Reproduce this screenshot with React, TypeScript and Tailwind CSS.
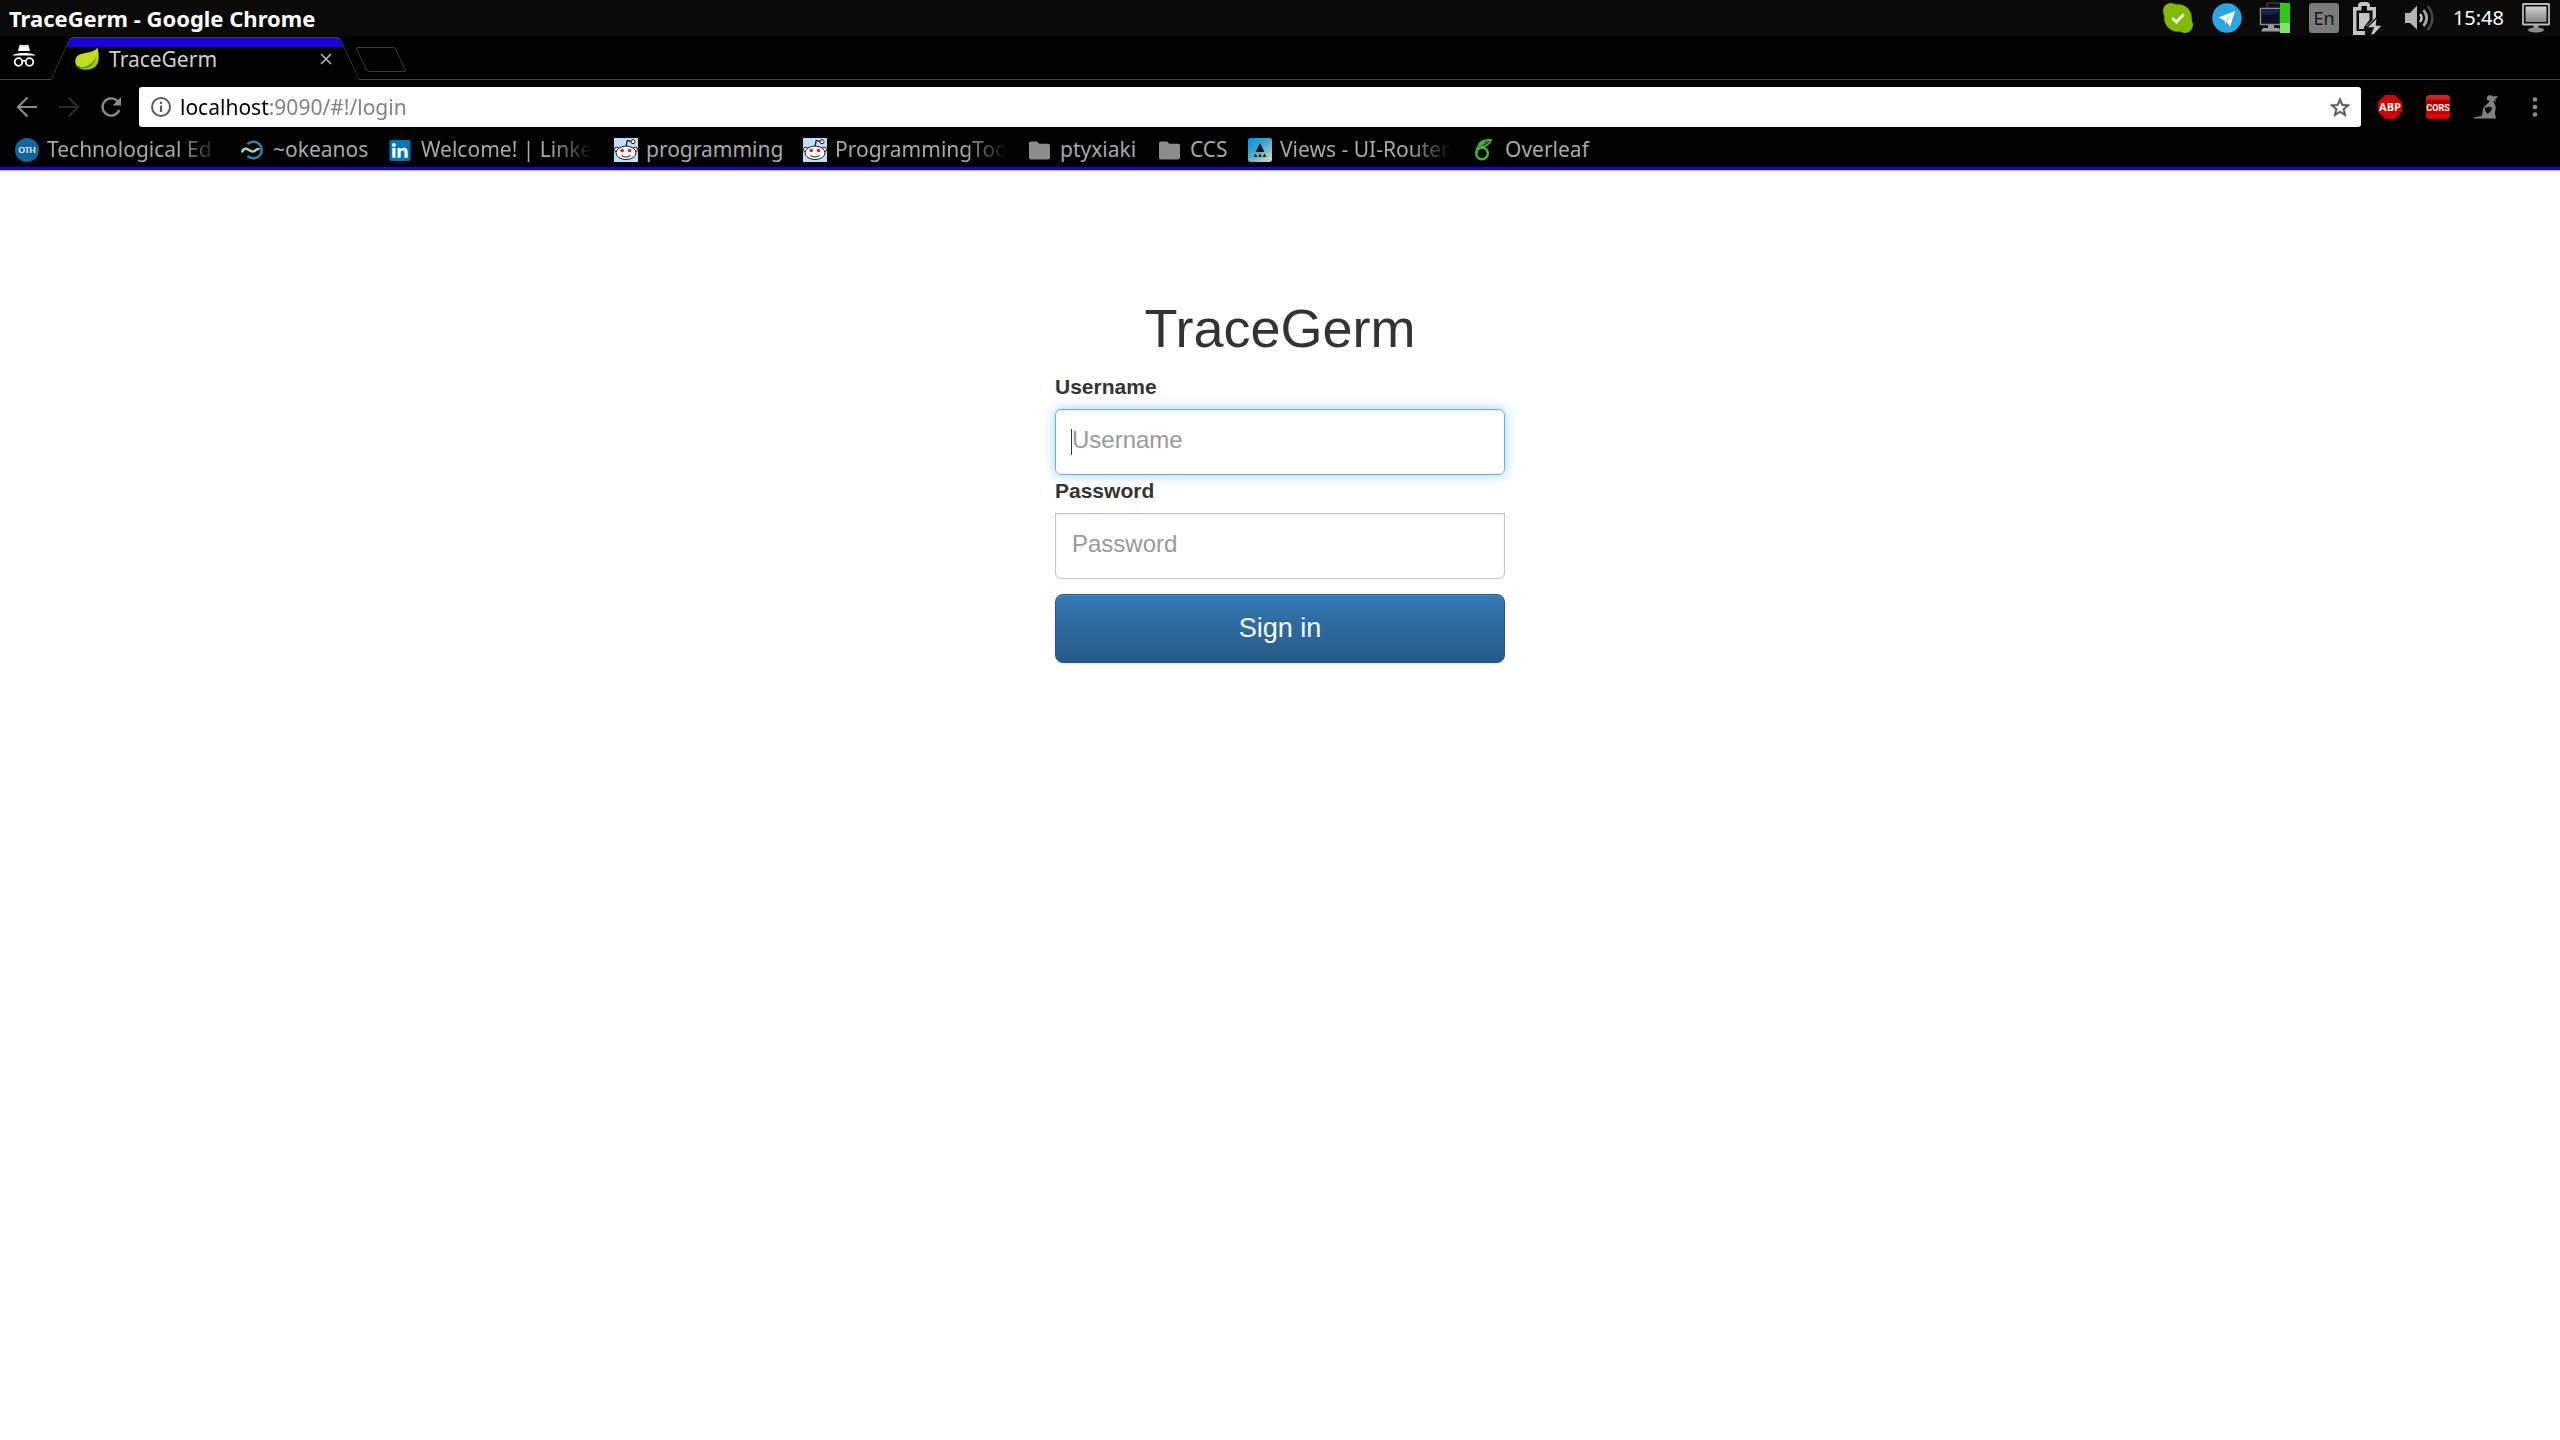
import React from "react";

const Incognito = () => (
  <svg width="24" height="24" viewBox="0 0 24 24" fill="none" aria-hidden="true">
    <path d="M7.4 1.6c.3-.8.9-1 1.600-.8L12 1.600l3-.8c.7-.2 1.300 0 1.600.8L18 7H6z" fill="#fff" />
    <path d="M0.500 11.500C2 10 5 9 12 9s10 1 11.500 2.500z" fill="#fff" />
    <circle cx="6.500" cy="18" r="3.800" stroke="#fff" strokeWidth="1.800" />
    <circle cx="17.500" cy="18" r="3.800" stroke="#fff" strokeWidth="1.800" />
    <path d="M10 17.500c1.200-1.200 2.800-1.200 4 0" stroke="#fff" strokeWidth="1.600" />
  </svg>
);

const Leaf = () => (
  <svg width="24" height="24" viewBox="0 0 24 24" aria-hidden="true">
    <defs>
      <linearGradient id="leaf" x1="0" y1="0" x2="1" y2="1">
        <stop offset="0" stopColor="#b9d51c" />
        <stop offset="0.600" stopColor="#c6dc22" />
        <stop offset="1" stopColor="#7fae1c" />
      </linearGradient>
    </defs>
    <path d="M22.500 0.500C24.500 9 24.500 16 20 20c-4 3.500-11 3.500-15.500 1.500C1.500 19.500 0 17 .3 13.500 1 7 8 6.500 14 5.300 18 4.500 21 3 22.500.5z" fill="url(#leaf)" />
    <path d="M3 20c7 1 14-1.500 18-10-1.500 9-9 13.500-18 10z" fill="#4f8f1e" />
    <path d="M2.500 19c1.500 0 3 1 3 3.500-2 .5-3.500-1-3-3.500z" fill="#12602a" />
    <path d="M5 21.500c4 2 11 2 15-1.500-3 2-9 2.500-15 1.500z" fill="#2e7a24" />
  </svg>
);

const Close = () => (
  <svg width="12" height="12" viewBox="0 0 12 12" stroke="#b4b4b4" strokeWidth="1.600" aria-hidden="true">
    <path d="M1 1l10 10M11 1L1 11" />
  </svg>
);

const Arrow = ({ flip, color }: { flip?: boolean; color: string }) => (
  <svg width="22" height="22" viewBox="0 0 22 22" fill="none" stroke={color} strokeWidth="2.200" aria-hidden="true">
    <path d={flip ? "M1 11h18.500M10.500 1.500l9.500 9.500-9.500 9.500" : "M21 11H2.500M11.500 1.500L2 11l9.500 9.500"} />
  </svg>
);

const Reload = () => (
  <svg width="22" height="22" viewBox="0 0 22 22" fill="none" aria-hidden="true">
    <path d="M19.200 14A8.600 8.600 0 1 1 17.500 5.200" stroke="#8c8c8c" strokeWidth="2.300" />
    <path d="M21 1v8.500h-8.500z" fill="#8c8c8c" />
  </svg>
);

const Info = () => (
  <svg width="22" height="22" viewBox="0 0 22 22" fill="none" aria-hidden="true">
    <circle cx="11" cy="11" r="9" stroke="#5a5a5a" strokeWidth="2" />
    <path d="M11 9.500V16M11 5.800v2.200" stroke="#5a5a5a" strokeWidth="2.200" />
  </svg>
);

const Star = () => (
  <svg width="24" height="24" viewBox="0 0 24 24" aria-hidden="true">
    <path d="M22 9.740l-7.190-.62L12 2.500 9.190 9.130 2 9.740l5.460 4.730-1.640 7.030L12 17.770l6.180 3.730-1.630-7.030L22 9.740zM12 15.900l-3.760 2.270 1-4.280-3.320-2.880 4.380-.38L12 6.600l1.710 4.040 4.380.38-3.320 2.880 1 4.280L12 15.900z" fill="#5a5a5a" stroke="#5a5a5a" strokeWidth="0.500" />
  </svg>
);

const Abp = () => (
  <svg width="24" height="24" viewBox="0 0 24 24" aria-hidden="true">
    <path d="M7 0h10l7 7v10l-7 7H7l-7-7V7z" fill="#d00000" />
    <text x="12" y="16" textAnchor="middle" fontFamily="Open Sans, sans-serif" fontWeight="700" fontSize="11" fill="#fff">ABP</text>
  </svg>
);

const Cors = () => (
  <svg width="24" height="24" viewBox="0 0 24 24" aria-hidden="true">
    <defs>
      <linearGradient id="cors" x1="0" y1="0" x2="0" y2="1">
        <stop offset="0" stopColor="#c93030" />
        <stop offset="0.200" stopColor="#c91818" />
        <stop offset="0.210" stopColor="#a80000" />
        <stop offset="0.780" stopColor="#c80000" />
        <stop offset="0.850" stopColor="#f40000" />
        <stop offset="1" stopColor="#d80000" />
      </linearGradient>
    </defs>
    <rect width="24" height="24" rx="3.500" fill="url(#cors)" />
    <text x="12" y="15.500" textAnchor="middle" fontFamily="Roboto, sans-serif" fontWeight="700" fontSize="9" fill="#fff">CORS</text>
  </svg>
);

const Figure = () => (
  <svg width="24" height="24" viewBox="0 0 24 24" fill="#808080" aria-hidden="true">
    <path fillRule="evenodd" d="M0 23.500v-1.200l7.500-1.300C9 19 8 15 10 12c1.500-2 3.500-3.500 5-4.800l.3-1.700c-1.500 0-2.500-1-2.500-2.300C12.800 1.500 14 .2 16 .2c1.500 0 2.500.6 3.300 1.300L23.800 1c-.6 1.700-1.600 2.700-3 3.100.7.900 1.500 1.400 1.200 2.400l-2.500-.7c-.2 1.500 1.500 2.700 2 5.200.6 3-.8 6-.5 8.500.3 1.500 1.500 3 .8 4zM11 12.500c-.7 2 .2 4 2.500 6.200 2.800-1.700 4.500-3.700 4.300-6-2-1.400-4-.8-4.800 0-.6-.5-1.300-.6-2-.2z" />
  </svg>
);

const Dots = () => (
  <svg width="6" height="22" viewBox="0 0 6 22" fill="#8c8c8c" aria-hidden="true">
    <circle cx="3" cy="3.500" r="2.300" />
    <circle cx="3" cy="11" r="2.300" />
    <circle cx="3" cy="18.500" r="2.300" />
  </svg>
);

const Oth = () => (
  <svg width="24" height="24" viewBox="0 0 24 24" aria-hidden="true">
    <circle cx="12" cy="12" r="12" fill="#13679f" />
    <text x="12" y="15" textAnchor="middle" fontFamily="Lato, sans-serif" fontWeight="700" fontSize="8" fill="#fff">OTH</text>
  </svg>
);

const Okeanos = () => (
  <svg width="24" height="24" viewBox="0 0 24 24" fill="none" aria-hidden="true">
    <path d="M6.500 6.200A8.300 8.300 0 1 1 6.500 17.800" stroke="#3580a8" strokeWidth="2.600" />
    <path d="M1.200 13.500c1.500-3 4-3.500 6.300-1.700s4.500 2.700 7 .4c1-1 1.800-1.300 3-1.200" stroke="#9fd0c9" strokeWidth="2.600" strokeLinecap="round" />
  </svg>
);

const LinkedIn = () => (
  <svg width="24" height="24" viewBox="0 0 24 24" aria-hidden="true">
    <rect x="0.500" y="2" width="21" height="21" rx="1.800" fill="#0077b5" />
    <path d="M3.300 10h3.200v9.800H3.300zM8.500 10h3.100v1.300c.6-1 1.700-1.600 3.200-1.600 3.100 0 3.900 1.900 3.900 4.700v5.400h-3.200v-4.800c0-1.300-.1-2.500-1.800-2.500s-2 1.200-2 2.500v4.800H8.500z" fill="#fff" />
    <circle cx="4.900" cy="7" r="1.900" fill="#fff" />
  </svg>
);

const Reddit = () => (
  <svg width="24" height="24" viewBox="0 0 24 24" aria-hidden="true">
    <rect width="24" height="24" fill="#c4dcf4" />
    <g fill="#fff" stroke="#1c1c1c" strokeWidth="1">
      <circle cx="2.800" cy="11.500" r="2.300" />
      <circle cx="21.200" cy="11.500" r="2.300" />
      <path d="M12.200 8.500l.8-5.300c.1-.7.600-.8 1.200-.6l3 1" fill="none" strokeWidth="1.300" />
      <circle cx="19" cy="3.700" r="2" />
      <ellipse cx="12" cy="14.800" rx="10" ry="6.700" />
      <path d="M7.500 17.300c2.500 2.200 6.500 2.200 9 0" fill="none" strokeWidth="1.100" />
    </g>
    <circle cx="8.200" cy="12.500" r="1.700" fill="#f01010" />
    <circle cx="15.600" cy="12.500" r="1.700" fill="#f01010" />
  </svg>
);

const Folder = () => (
  <svg width="24" height="24" viewBox="0 0 24 24" fill="#8c8c8c" aria-hidden="true">
    <path d="M1 5.500c0-1.200.8-2 2-2h6l2.300 2.300H20c1.200 0 2 .8 2 2v11.700c0 1.200-.8 2-2 2H3c-1.200 0-2-.8-2-2z" />
  </svg>
);

const UiRouter = () => (
  <svg width="24" height="24" viewBox="0 0 24 24" aria-hidden="true">
    <defs>
      <linearGradient id="uir" x1="0.100" y1="0" x2="0.900" y2="1">
        <stop offset="0" stopColor="#0095e0" />
        <stop offset="0.400" stopColor="#3ba7cf" />
        <stop offset="1" stopColor="#cfd9bd" />
      </linearGradient>
    </defs>
    <rect width="24" height="24" rx="2.500" fill="url(#uir)" />
    <path d="M12 5l4.500 9h-9zM7.500 15.500L9.300 19H5.700zM12 15.500l1.800 3.500h-3.600zM16.500 15.500l1.800 3.500h-3.600z" fill="#0c1418" />
  </svg>
);

const Overleaf = () => (
  <svg width="20" height="24" viewBox="0 0 20 24" fill="none" stroke="#45b03c" aria-hidden="true">
    <circle cx="9" cy="15.500" r="5.800" strokeWidth="2.500" />
    <path d="M3.500 15C3 10 6 6.500 11 4.500c-2 .2-3.500.6-5 1.500C8.500 2.500 13 2 18 1.800 17 5.500 13.500 8 8 9.500" strokeWidth="1.900" strokeLinejoin="round" />
    <path d="M7 8.500c2.500-1.800 5-3.500 8.500-5" strokeWidth="1.200" />
  </svg>
);

const Skype = () => (
  <svg width="32" height="32" viewBox="0 0 32 32" aria-hidden="true">
    <g fill="#7fba00">
      <circle cx="16" cy="16" r="13.800" />
      <circle cx="9" cy="9" r="8" />
      <circle cx="23" cy="23" r="8" />
    </g>
    <path d="M11 16.800l3.300 3.300 6.700-6.800" fill="none" stroke="#fff" strokeWidth="2.800" strokeLinecap="round" />
  </svg>
);

const Telegram = () => (
  <svg width="30" height="30" viewBox="0 0 30 30" aria-hidden="true">
    <circle cx="15" cy="15" r="14.700" fill="#2ca5e0" />
    <path d="M6.500 14.500L23 8l-5 16-3.500-5.500L20 12l-7.500 5.500z" fill="#fff" />
    <path d="M12.500 17.500L20 12l-5.500 6.500-1 3.500z" fill="#d6ecf8" />
  </svg>
);

const Network = () => (
  <svg width="32" height="32" viewBox="0 0 32 32" aria-hidden="true">
    <rect x="8" y="1" width="17" height="15" fill="#0c1220" stroke="#4c4c4c" />
    <rect x="1.500" y="6.500" width="20" height="16" fill="#060f24" stroke="#8a8a8a" strokeWidth="1.500" />
    <path d="M2 12c6 2 12 1 19-2v-3H2z" fill="#15264a" />
    <path d="M9 23h6v3h5l2 3.500H2L4 26h5z" fill="#9a9a9a" />
    <rect x="21" y="1" width="10" height="20" fill="#2fc814" />
    <rect x="21" y="21" width="10" height="10" fill="#7de56c" />
  </svg>
);

const Keyboard = () => (
  <svg width="30" height="30" viewBox="0 0 30 30" aria-hidden="true">
    <rect width="30" height="30" rx="3" fill="#7b7b7b" />
    <text x="15" y="21.500" textAnchor="middle" fontFamily="Noto Sans, sans-serif" fontSize="18" fill="#161616">En</text>
  </svg>
);

const Battery = () => (
  <svg width="30" height="33" viewBox="0 0 30 33" aria-hidden="true">
    <path d="M0 5h5V3.500C5 1.500 6.500 0 8.500 0h5C15.500 0 17 1.500 17 3.500V5h6v12l-11 9v7H0z" fill="#c4c4c4" />
    <path d="M3.500 8.500h5V4h5.500v4.500h5.500V18L13 24v5H3.500z" fill="#0a0a0a" />
    <path d="M6 11h10.500v7L11 25v2H6z" fill="#c4c4c4" />
    <path d="M24.500 15L13 26h7l-3 7h4L30 23h-6.500z" fill="#c4c4c4" stroke="#0a0a0a" strokeWidth="1.500" />
  </svg>
);

const Speaker = () => (
  <svg width="30" height="26" viewBox="0 0 30 26" fill="none" aria-hidden="true">
    <path d="M0 8h5l7-7.500v24L5 18H0z" fill="#b4b4b4" />
    <path d="M15 9c2 2.500 2 5.500 0 8" stroke="#c0c0c0" strokeWidth="2.500" />
    <path d="M18.500 5c4 5 4 11 0 16" stroke="#a8a8a8" strokeWidth="2.800" />
    <path d="M22.500 1c6.500 7 6.500 16.500 0 24" stroke="#484848" strokeWidth="2.500" />
  </svg>
);

const Monitor = () => (
  <svg width="28" height="30" viewBox="0 0 28 30" aria-hidden="true">
    <defs>
      <linearGradient id="mon" x1="0" y1="0" x2="0" y2="1">
        <stop offset="0" stopColor="#d0d0d0" />
        <stop offset="1" stopColor="#858585" />
      </linearGradient>
    </defs>
    <rect x="1" y="1" width="26" height="20.500" rx="0.500" fill="#0a0a0a" stroke="#bcbcbc" strokeWidth="1.800" />
    <rect x="3.500" y="3.500" width="21" height="15.500" fill="url(#mon)" />
    <path d="M11.500 22h5v3h-5z" fill="#a0a0a0" />
    <ellipse cx="14" cy="27" rx="8" ry="2.600" fill="#8c8c8c" />
  </svg>
);

const bookmarks = [
  { label: "Technological Ed", icon: <Oth />, width: "w-[174px]", fade: true },
  { label: "~okeanos", icon: <Okeanos />, width: "w-24", fade: false },
  { label: "Welcome! | Linke", icon: <LinkedIn />, width: "w-[173px]", fade: true },
  { label: "programming", icon: <Reddit />, width: "w-[137px]", fade: false },
  { label: "ProgrammingToo", icon: <Reddit />, width: "w-[173px]", fade: true },
  { label: "ptyxiaki", icon: <Folder />, width: "w-[78px]", fade: false },
  { label: "CCS", icon: <Folder />, width: "w-[38px]", fade: false },
  { label: "Views - UI-Router", icon: <UiRouter />, width: "w-[173px]", fade: true },
  { label: "Overleaf", icon: <Overleaf />, width: "w-[90px]", fade: false },
];

function SystemPanel() {
  return (
    <header className="flex h-9 items-center justify-between bg-[#090a09] pr-[10px] pl-[9px] text-white">
      <h2 className="text-[22px] leading-9 font-bold">TraceGerm - Google Chrome</h2>
      <div className="flex items-center gap-[18px]">
        <button aria-label="Skype"><Skype /></button>
        <button aria-label="Telegram"><Telegram /></button>
        <button aria-label="Network" className="-ml-px"><Network /></button>
        <button aria-label="Keyboard layout"><Keyboard /></button>
        <button aria-label="Battery" className="-ml-1"><Battery /></button>
        <button aria-label="Volume" className="ml-1"><Speaker /></button>
        <time className="text-[20px] leading-9">15:48</time>
        <button aria-label="Session"><Monitor /></button>
      </div>
    </header>
  );
}

function TabStrip() {
  return (
    <div className="flex h-11 items-end border-b border-[#454545] bg-black">
      <div className="flex h-full w-[50px] items-center pb-1 pl-3"><Incognito /></div>
      <div className="relative -mb-px flex h-[43px] w-[310px] items-center pt-1 pb-1 pl-[25px] pr-[28px]">
        <span className="absolute inset-y-0 left-0 w-1/2 origin-bottom -skew-x-[25deg] rounded-tl-[4px] border-t border-l border-[#454545] bg-[linear-gradient(#1a00dc_9px,#000_9px)]" />
        <span className="absolute inset-y-0 right-0 w-1/2 origin-bottom skew-x-[25deg] rounded-tr-[4px] border-t border-r border-[#454545] bg-[linear-gradient(#1a00dc_9px,#000_9px)]" />
        <span className="relative"><Leaf /></span>
        <span className="relative ml-[10px] flex-1 text-[21px] leading-6 text-[#cfcfcf]">TraceGerm</span>
        <button aria-label="Close tab" className="relative"><Close /></button>
      </div>
      <button aria-label="New tab" className="mb-[7px] ml-px h-[25px] w-10 skew-x-[25deg] rounded-[3px] border border-[#3c3c3c]" />
    </div>
  );
}

function Toolbar() {
  return (
    <div className="flex h-[54px] items-center bg-black pr-[22px] pl-4">
      <div className="flex w-[123px] gap-5">
        <button aria-label="Back"><Arrow color="#8c8c8c" /></button>
        <button aria-label="Forward" disabled><Arrow flip color="#2a2a2a" /></button>
        <button aria-label="Reload"><Reload /></button>
      </div>
      <div className="flex h-10 flex-1 items-center rounded-[3px] bg-white pr-[9px] pl-[11px]">
        <button aria-label="Site information"><Info /></button>
        <input
          aria-label="Address"
          defaultValue="localhost:9090/#!/login"
          className="ml-2 h-8 min-w-0 flex-1 bg-[linear-gradient(90deg,#000_89px,#7f7f7f_89px)] bg-clip-text text-[21px] text-transparent outline-none"
        />
        <button aria-label="Bookmark this page"><Star /></button>
      </div>
      <div className="ml-[17px] flex items-center gap-6">
        <button aria-label="Adblock Plus"><Abp /></button>
        <button aria-label="CORS"><Cors /></button>
        <button aria-label="Extension"><Figure /></button>
      </div>
      <button aria-label="Menu" className="ml-[34px]"><Dots /></button>
    </div>
  );
}

function BookmarksBar() {
  return (
    <nav className="flex h-9 items-center gap-5 border-b-3 border-[#1a00d8] bg-black pb-1 pl-[15px] text-[21px] leading-7 text-[#a8a8a8]">
      {bookmarks.map((b) => (
        <a key={b.label} href="#" className="flex items-center gap-2">
          <span className="w-6 shrink-0 pt-0.5">{b.icon}</span>
          <span
            className={`${b.width} whitespace-nowrap ${b.fade ? "overflow-hidden [mask-image:linear-gradient(90deg,#000_75%,transparent)]" : ""}`}
          >
            {b.label}
          </span>
        </a>
      ))}
    </nav>
  );
}

function LoginForm() {
  return (
    <main className="flex justify-center border-t border-[#b4b4c4] pt-[127px] font-['Liberation_Sans',Arial,sans-serif] text-[#333]">
      <form className="flex w-[450px] flex-col" onSubmit={(e) => e.preventDefault()}>
        <h1 className="mb-[13px] text-center text-[54px] leading-[60px]">TraceGerm</h1>
        <label htmlFor="username" className="mb-1.5 text-[21px] leading-8 font-bold">Username</label>
        <div className="relative">
          <input
            id="username"
            placeholder="Username"
            className="block h-[66px] w-full rounded-md border border-[#66afe9] px-4 pb-1 text-[24px] caret-transparent shadow-[inset_0_1px_1px_rgba(0,0,0,0.075),0_0_12px_rgba(102,175,233,0.6)] outline-none placeholder:text-[#999]"
          />
          <span className="absolute top-5 left-4 h-[26px] w-px bg-[#333]" />
        </div>
        <label htmlFor="password" className="mb-1.5 text-[21px] leading-8 font-bold">Password</label>
        <input
          id="password"
          type="password"
          placeholder="Password"
          className="mb-[15px] block h-[66px] w-full rounded-b-md border border-[#c4c4c4] px-4 pb-1 text-[24px] shadow-[inset_0_1px_2px_rgba(0,0,0,0.075)] outline-none placeholder:text-[#999]"
        />
        <button
          type="submit"
          className="h-[69px] rounded-lg border border-[#245580] bg-linear-to-b from-[#337ab7] to-[#265a88] text-[27px] text-white shadow-[inset_0_1px_0_rgba(255,255,255,0.15),0_1px_2px_rgba(0,0,0,0.1)] [text-shadow:0_-1px_0_rgba(0,0,0,0.2)]"
        >
          Sign in
        </button>
      </form>
    </main>
  );
}

export default function App() {
  return (
    <div className="min-h-screen bg-white font-['Noto_Sans',sans-serif]">
      <SystemPanel />
      <TabStrip />
      <Toolbar />
      <BookmarksBar />
      <LoginForm />
    </div>
  );
}
